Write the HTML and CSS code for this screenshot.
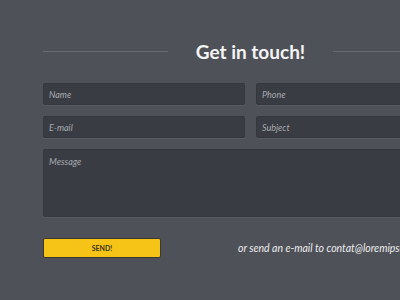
FILE: index.html
```html
<!DOCTYPE html>
<html lang="en">
<head>
    <meta charset="UTF-8">
    <meta name="viewport" content="width=device-width, initial-scale=1.0">
    <title>Get in touch</title>
    <link rel="stylesheet" href="styles.css">
</head>
<body>

    <div class="contact">
        <div class="contact-title">
            <span class="rule"></span>
            <h1>Get in touch!</h1>
            <span class="rule"></span>
        </div>

        <form class="contact-form" action="#" method="POST">
            <div class="form-row">
                <input type="text" name="name" placeholder="Name">
                <input type="text" name="phone" placeholder="Phone">
            </div>
            <div class="form-row">
                <input type="email" name="email" placeholder="E-mail">
                <input type="text" name="subject" placeholder="Subject">
            </div>
            <textarea name="message" placeholder="Message"></textarea>

            <div class="form-footer">
                <button type="submit" class="send-button">SEND!</button>
                <p class="mail-note">or send an e-mail to contat@loremipsum.com</p>
            </div>
        </form>
    </div>

</body>
</html>
```

FILE: styles.css
```css
html, body {
    overflow: hidden;
}

body {
    font-family: Lato, "Open Sans", Arial, sans-serif;
    background-color: #4f5159;
    margin: 0;
    padding: 0;
    color: #fff;
}

.contact {
    width: 415px;
    margin-left: 43px;
    padding-top: 37px;
}

.contact-title {
    display: flex;
    align-items: center;
    gap: 28px;
    height: 28px;
}

.contact-title .rule {
    flex: 1;
    height: 1px;
    background-color: #696b71;
    margin-top: 1px;
}

.contact-title h1 {
    margin: 0;
    font-size: 19px;
    font-weight: 700;
    color: #f4f4f4;
}

.contact-form {
    margin-top: 18px;
    display: flex;
    flex-direction: column;
    gap: 11px;
}

.form-row {
    display: flex;
    gap: 11px;
}

.contact-form input,
.contact-form textarea {
    box-sizing: border-box;
    font-family: Lato, "Open Sans", Arial, sans-serif;
    font-style: italic;
    font-size: 9px;
    color: #ddd;
    background-color: #393c43;
    border: 1px solid #34373d;
    border-radius: 2px;
    box-shadow: 0 1px 0 rgba(255, 255, 255, 0.06);
    outline: none;
}

.contact-form input {
    flex: 1;
    min-width: 0;
    height: 22px;
    padding: 0 5px;
}

.contact-form textarea {
    width: 100%;
    height: 68px;
    padding: 6px 5px;
    resize: none;
}

.contact-form ::placeholder {
    color: #a7a9ae;
}

.form-footer {
    display: flex;
    align-items: center;
    gap: 77px;
    margin-top: 10px;
}

.send-button {
    flex: none;
    width: 118px;
    height: 20px;
    font-family: Lato, "Open Sans", Arial, sans-serif;
    font-size: 7px;
    font-weight: 700;
    color: #3a3520;
    background-color: #f6c416;
    border: 1px solid #3d3a2c;
    border-radius: 2px;
    cursor: pointer;
}

.mail-note {
    margin: 0;
    font-size: 10.5px;
    font-style: italic;
    white-space: nowrap;
    color: #ececec;
}
```
